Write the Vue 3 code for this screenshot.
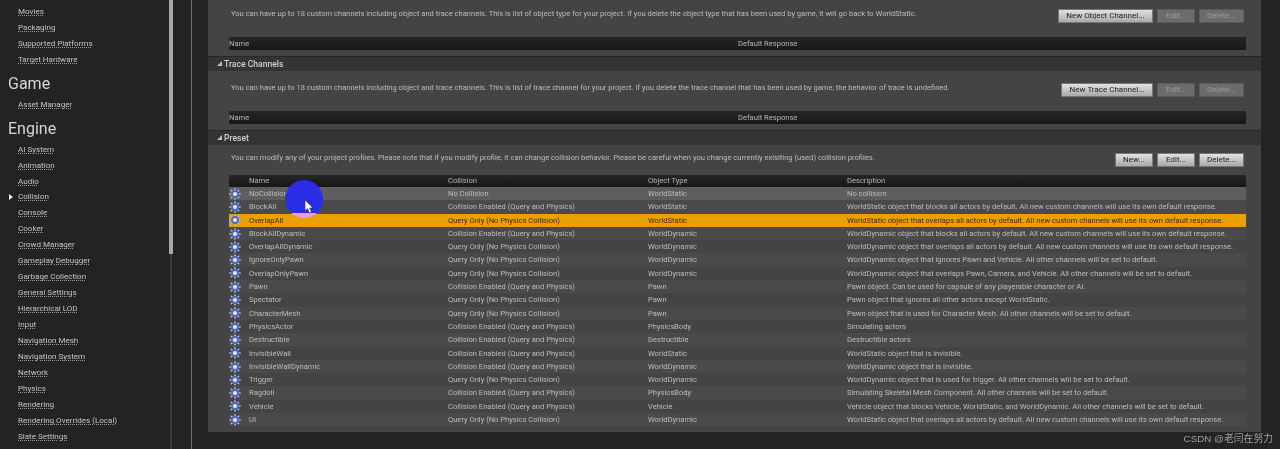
<template>
  <div class="screen">
    <nav class="sidebar">
      <a v-for="item in topLinks" :key="item" class="link">{{ item }}</a>
      <h2 class="group">Game</h2>
      <a class="link">Asset Manager</a>
      <h2 class="group">Engine</h2>
      <a v-for="item in engineLinks" :key="item" class="link" :class="{ current: item === 'Collision' }">{{ item }}</a>
    </nav>
    <div class="scrollbar"><div class="thumb"></div></div>
    <div class="gutter"></div>

    <main class="content">
      <section class="panel first">
        <div class="body">
          <div class="info">
            <p>You can have up to 18 custom channels including object and trace channels. This is list of object type for your project. If you delete the object type that has been used by game, it will go back to WorldStatic.</p>
            <div class="buttons">
              <button class="btn">New Object Channel...</button>
              <button class="btn off edit">Edit...</button>
              <button class="btn off del">Delete...</button>
            </div>
          </div>
          <div class="channel-head"><span class="c-name">Name</span><span>Default Response</span></div>
        </div>
      </section>

      <section class="panel">
        <h3 class="title"><i class="tri"></i>Trace Channels</h3>
        <div class="body">
          <div class="info">
            <p>You can have up to 18 custom channels including object and trace channels. This is list of trace channel for your project. If you delete the trace channel that has been used by game, the behavior of trace is undefined.</p>
            <div class="buttons">
              <button class="btn">New Trace Channel...</button>
              <button class="btn off edit">Edit...</button>
              <button class="btn off del">Delete...</button>
            </div>
          </div>
          <div class="channel-head"><span class="c-name">Name</span><span>Default Response</span></div>
        </div>
      </section>

      <section class="panel">
        <h3 class="title"><i class="tri"></i>Preset</h3>
        <div class="body preset">
          <div class="info">
            <p>You can modify any of your project profiles. Please note that if you modify profile, it can change collision behavior. Please be careful when you change currently exisiting (used) collision profiles.</p>
            <div class="buttons">
              <button class="btn new">New...</button>
              <button class="btn edit">Edit...</button>
              <button class="btn del">Delete...</button>
            </div>
          </div>
          <div class="table">
            <div class="row head">
              <span></span><span>Name</span><span>Collision</span><span>Object Type</span><span>Description</span>
            </div>
            <div
              v-for="(p, i) in presets"
              :key="p[0]"
              class="row"
              :class="{ hover: i === 0, selected: i === 2, alt: i % 2 === 1 }"
            >
              <span class="icon">
                <svg width="12" height="12" viewBox="0 0 12 12">
                  <g stroke="#a4b4e6" stroke-width="1.6" stroke-linecap="round">
                    <path d="M6 .9v10.2M.9 6h10.2M2.4 2.4l7.2 7.2M9.6 2.4l-7.2 7.2" />
                  </g>
                  <circle cx="6" cy="6" r="3.9" fill="#5068b4" />
                  <circle cx="6" cy="6" r="2.1" fill="#dfe5f5" />
                </svg>
              </span>
              <span>{{ p[0] }}</span>
              <span>{{ p[1] }}</span>
              <span>{{ p[2] }}</span>
              <span>{{ p[3] }}</span>
            </div>
          </div>
        </div>
      </section>
    </main>

    <div class="pointer">
      <svg width="10" height="15" viewBox="0 0 10 15">
        <path d="M1 1v11l2.6-2.4L5.4 14l2-.9-1.8-4.2H9z" fill="#fff" stroke="#333" stroke-width=".6" />
      </svg>
    </div>
    <div class="mark">CSDN @老闫在努力</div>
  </div>
</template>

<script setup>
const topLinks = ['Maps & Modes', 'Movies', 'Packaging', 'Supported Platforms', 'Target Hardware']

const engineLinks = [
  'AI System', 'Animation', 'Audio', 'Collision', 'Console', 'Cooker', 'Crowd Manager',
  'Gameplay Debugger', 'Garbage Collection', 'General Settings', 'Hierarchical LOD', 'Input',
  'Navigation Mesh', 'Navigation System', 'Network', 'Physics', 'Rendering',
  'Rendering Overrides (Local)', 'Slate Settings', 'Streaming'
]

const both = 'Collision Enabled (Query and Physics)'
const query = 'Query Only (No Physics Collision)'

const presets = [
  ['NoCollision', 'No Collision', 'WorldStatic', 'No collision'],
  ['BlockAll', both, 'WorldStatic', 'WorldStatic object that blocks all actors by default. All new custom channels will use its own default response.'],
  ['OverlapAll', query, 'WorldStatic', 'WorldStatic object that overlaps all actors by default. All new custom channels will use its own default response.'],
  ['BlockAllDynamic', both, 'WorldDynamic', 'WorldDynamic object that blocks all actors by default. All new custom channels will use its own default response.'],
  ['OverlapAllDynamic', query, 'WorldDynamic', 'WorldDynamic object that overlaps all actors by default. All new custom channels will use its own default response.'],
  ['IgnoreOnlyPawn', query, 'WorldDynamic', 'WorldDynamic object that ignores Pawn and Vehicle. All other channels will be set to default.'],
  ['OverlapOnlyPawn', query, 'WorldDynamic', 'WorldDynamic object that overlaps Pawn, Camera, and Vehicle. All other channels will be set to default.'],
  ['Pawn', both, 'Pawn', 'Pawn object. Can be used for capsule of any playerable character or AI.'],
  ['Spectator', query, 'Pawn', 'Pawn object that ignores all other actors except WorldStatic.'],
  ['CharacterMesh', query, 'Pawn', 'Pawn object that is used for Character Mesh. All other channels will be set to default.'],
  ['PhysicsActor', both, 'PhysicsBody', 'Simulating actors'],
  ['Destructible', both, 'Destructible', 'Destructible actors'],
  ['InvisibleWall', both, 'WorldStatic', 'WorldStatic object that is invisible.'],
  ['InvisibleWallDynamic', both, 'WorldDynamic', 'WorldDynamic object that is invisible.'],
  ['Trigger', query, 'WorldDynamic', 'WorldDynamic object that is used for trigger. All other channels will be set to default.'],
  ['Ragdoll', both, 'PhysicsBody', 'Simulating Skeletal Mesh Component. All other channels will be set to default.'],
  ['Vehicle', both, 'Vehicle', 'Vehicle object that blocks Vehicle, WorldStatic, and WorldDynamic. All other channels will be set to default.'],
  ['UI', query, 'WorldDynamic', 'WorldStatic object that overlaps all actors by default. All new custom channels will use its own default response.']
]
</script>

<style>
html, body {
  margin: 0;
  background: #232323;
  overflow: hidden;
}
</style>

<style scoped>
/* the source is a soft video frame, so everything gets a slight blur */
.screen {
  position: relative;
  display: flex;
  width: 1280px;
  height: 449px;
  overflow: hidden;
  background: #232323;
  font-family: Roboto, "Liberation Sans", sans-serif;
  filter: blur(0.35px);
}

.sidebar {
  flex: none;
  width: 168px;
  margin-top: -12px;
  display: flex;
  flex-direction: column;
  align-items: flex-start;
  padding-left: 18px;
  box-sizing: border-box;
}

.link {
  position: relative;
  flex: none;
  height: 15.95px;
  line-height: 16px;
  font-size: 8.05px;
  color: #c4c4c4;
  text-decoration: underline dotted #9a9a9a;
  text-underline-offset: 1px;
  white-space: nowrap;
}

.link.current::before {
  content: "";
  position: absolute;
  left: -9px;
  top: 5px;
  border-left: 4px solid #eee;
  border-top: 3px solid transparent;
  border-bottom: 3px solid transparent;
}

.group {
  margin: 5px 0 2px -10px;
  height: 22px;
  line-height: 22px;
  font-size: 16px;
  font-weight: 400;
  color: #d6d6d6;
}

.scrollbar {
  flex: none;
  width: 5px;
  display: flex;
  justify-content: center;
  background: linear-gradient(#3c3c3c, #3c3c3c) no-repeat center / 2px 100%;
}

.thumb {
  width: 4px;
  height: 254px;
  background: #a8a8a8;
}

.gutter {
  flex: none;
  width: 18px;
  border-right: 1px solid #6e6e6e;
}

.content {
  flex: none;
  width: 1053px;
  margin-left: 16px;
}

.panel {
  background: #444;
}

.first .body {
  height: 56px;
}

.title {
  margin: 0;
  height: 14px;
  line-height: 14px;
  border-top: 1px solid #272727;
  background: #343434;
  font-size: 8.6px;
  font-weight: 500;
  color: #cfcfcf;
  padding-left: 16px;
  position: relative;
}

.tri {
  position: absolute;
  left: 9px;
  top: 4px;
  border-left: 5px solid transparent;
  border-bottom: 5px solid #bbb;
}

.body {
  box-sizing: border-box;
  height: 59px;
  padding: 0 15px 0 21px;
  background: #444;
}

.body.preset {
  height: 287px;
}

.info {
  display: flex;
  justify-content: space-between;
  align-items: flex-start;
  height: 40px;
  padding: 12px 2px 0 2px;
  box-sizing: border-box;
}

.first .info {
  height: 37px;
  padding-top: 9px;
}

.preset .info {
  height: 30px;
  padding-top: 8px;
}

.info p {
  margin: -0.5px 0 0;
  font-size: 7.57px;
  line-height: 9px;
  color: #bcbcbc;
  white-space: nowrap;
}

.buttons {
  display: flex;
  gap: 4px;
}

.btn {
  height: 14px;
  border: 1px solid #777;
  background: linear-gradient(#e2e2e2, #a9a9a9);
  color: #222;
  font-family: inherit;
  font-size: 8px;
  line-height: 12px;
  white-space: nowrap;
  padding: 0 7.5px;
}

.btn.new {
  width: 38px;
  padding: 0;
}

.btn.edit {
  width: 38px;
  padding: 0;
}

.btn.del {
  width: 45px;
  padding: 0;
}

.btn.off {
  background: #6c6c6c;
  border-color: #5a5a5a;
  color: #9c9c9c;
}

.channel-head {
  display: flex;
  height: 13px;
  line-height: 13px;
  background: linear-gradient(#262626, #171717);
  font-size: 7.57px;
  color: #b5b5b5;
}

.c-name {
  width: 509px;
}

.table {
  font-size: 7.57px;
  color: #bcbcbc;
}

.row {
  display: grid;
  grid-template-columns: 20px 199px 200px 199px 1fr;
  height: 13.3px;
  line-height: 13.3px;
  white-space: nowrap;
}

.row.head {
  height: 12px;
  line-height: 12px;
  background: linear-gradient(#262626, #171717);
  color: #b5b5b5;
}

.row.alt {
  background: #4a4a4a;
}

.row.hover {
  background: #5e5e5e;
}

.row.selected {
  background: #e9a100;
  color: #4a2500;
}

.icon {
  display: flex;
  align-items: center;
}

.pointer {
  position: absolute;
  left: 285px;
  top: 180px;
  width: 38px;
  height: 38px;
  border-radius: 50%;
  background: linear-gradient(#2a2ce6 0 88%, #e79be0 88%);
}

.pointer svg {
  position: absolute;
  left: 19px;
  top: 19px;
}

.mark {
  position: absolute;
  right: 7px;
  top: 432px;
  line-height: 14px;
  font-size: 9.8px;
  color: #a0a0a0;
  font-family: "Liberation Sans", "Noto Sans CJK SC", sans-serif;
}
</style>
